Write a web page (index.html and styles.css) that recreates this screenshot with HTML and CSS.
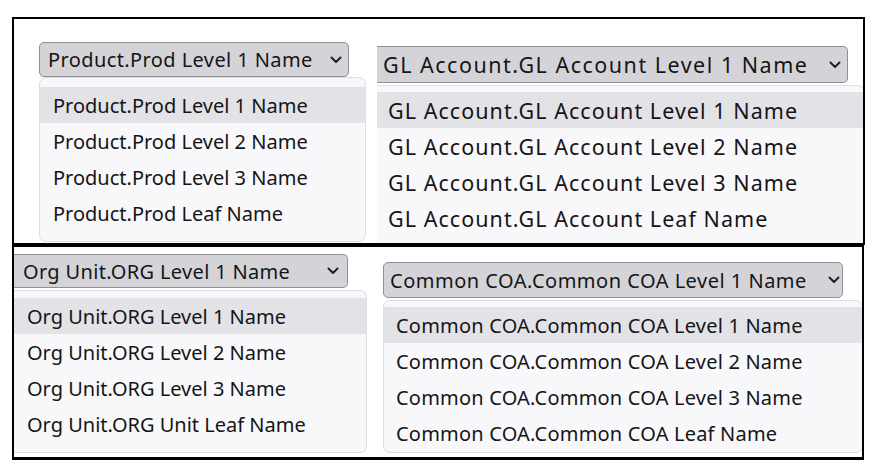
FILE: index.html
```html
<!DOCTYPE html>
<html lang="en">
<head>
<meta charset="utf-8">
<title>Hierarchy level dropdowns</title>
<link rel="stylesheet" href="styles.css">
</head>
<body>
<div class="frame">
  <section class="panel panel-top">
    <div class="pane pane-prod">
      <div class="select">
        <span class="select-label">Product.Prod Level 1 Name</span>
        <svg class="chev" viewBox="0 0 12 8"><polyline points="1.5,1.5 6,6 10.5,1.5"/></svg>
      </div>
      <ul class="menu">
        <li class="menu-item is-active">Product.Prod Level 1 Name</li>
        <li class="menu-item">Product.Prod Level 2 Name</li>
        <li class="menu-item">Product.Prod Level 3 Name</li>
        <li class="menu-item">Product.Prod Leaf Name</li>
      </ul>
    </div>
    <div class="pane pane-gl">
      <div class="select">
        <span class="select-label">GL Account.GL Account Level 1 Name</span>
        <svg class="chev" viewBox="0 0 12 8"><polyline points="1.5,1.5 6,6 10.5,1.5"/></svg>
      </div>
      <ul class="menu">
        <li class="menu-item is-active">GL Account.GL Account Level 1 Name</li>
        <li class="menu-item">GL Account.GL Account Level 2 Name</li>
        <li class="menu-item">GL Account.GL Account Level 3 Name</li>
        <li class="menu-item">GL Account.GL Account Leaf Name</li>
      </ul>
    </div>
  </section>
  <section class="panel panel-bottom">
    <div class="pane pane-org">
      <div class="select">
        <span class="select-label">Org Unit.ORG Level 1 Name</span>
        <svg class="chev" viewBox="0 0 12 8"><polyline points="1.5,1.5 6,6 10.5,1.5"/></svg>
      </div>
      <ul class="menu">
        <li class="menu-item is-active">Org Unit.ORG Level 1 Name</li>
        <li class="menu-item">Org Unit.ORG Level 2 Name</li>
        <li class="menu-item">Org Unit.ORG Level 3 Name</li>
        <li class="menu-item">Org Unit.ORG Unit Leaf Name</li>
      </ul>
    </div>
    <div class="pane pane-coa">
      <div class="select">
        <span class="select-label">Common COA.Common COA Level 1 Name</span>
        <svg class="chev" viewBox="0 0 12 8"><polyline points="1.5,1.5 6,6 10.5,1.5"/></svg>
      </div>
      <ul class="menu">
        <li class="menu-item is-active">Common COA.Common COA Level 1 Name</li>
        <li class="menu-item">Common COA.Common COA Level 2 Name</li>
        <li class="menu-item">Common COA.Common COA Level 3 Name</li>
        <li class="menu-item">Common COA.Common COA Leaf Name</li>
      </ul>
    </div>
  </section>
</div>
</body>
</html>
```

FILE: styles.css
```css
body {
  margin: 0;
  background: #ffffff;
  font-family: "Noto Sans", "Open Sans", sans-serif;
  font-size: 20px;
  color: #151517;
}

.frame {
  margin: 17px 0 0 12px;
  width: 853px;
}

.panel {
  display: flex;
  align-items: flex-start;
  box-sizing: border-box;
  border: 2px solid #000000;
  overflow: hidden;
}

.panel-top {
  height: 228px;
}

.panel-bottom {
  width: 852px;
  height: 215px;
  border-bottom-width: 3px;
}

.pane {
  flex: none;
  display: flex;
  flex-direction: column;
}

.select {
  display: flex;
  align-items: center;
  justify-content: space-between;
  box-sizing: border-box;
  background: #d4d4d8;
  border: 1px solid #8e8e93;
  border-radius: 5px;
  white-space: nowrap;
}

.chev {
  flex: none;
  width: 12px;
  height: 8px;
  fill: none;
  stroke: #222224;
  stroke-width: 2;
  stroke-linecap: round;
  stroke-linejoin: round;
}

.menu {
  list-style: none;
  margin: 0;
  padding: 0;
  box-sizing: border-box;
  background: #f8f8fa;
  border: 1px solid #dedee2;
  border-radius: 7px;
}

.menu-item {
  height: 36px;
  display: flex;
  align-items: center;
  white-space: nowrap;
}

.menu-item.is-active {
  background: #e2e2e7;
}

/* Product pane */
.pane-prod {
  margin: 23px 0 0 25px;
  width: 327px;
}
.pane-prod .select {
  width: 310px;
  height: 35px;
  padding: 0 6px 0 8px;
  letter-spacing: 0.4px;
}
.pane-prod .menu {
  height: 165px;
  padding-top: 9px;
}
.pane-prod .menu-item {
  padding-left: 13px;
}

/* GL Account pane */
.pane-gl {
  margin: 27px 0 0 11px;
  width: 488px;
  font-size: 21.5px;
}
.pane-gl .select {
  width: 471px;
  height: 37px;
  padding: 0 6px 0 6px;
  border-left: none;
  border-radius: 0 5px 5px 0;
  letter-spacing: 1.5px;
}
.pane-gl .menu {
  margin-top: 2px;
  height: 170px;
  padding-top: 6px;
  border-left: none;
  border-radius: 0 7px 7px 0;
  letter-spacing: 1.05px;
}
.pane-gl .menu-item {
  padding-left: 11px;
}

/* Org Unit pane */
.pane-org {
  margin: 7px 0 0 0;
  width: 353px;
}
.pane-org .select {
  width: 334px;
  height: 34px;
  padding: 0 8px 0 9px;
  border-left: none;
  border-radius: 0 5px 5px 0;
  letter-spacing: 0.33px;
}
.pane-org .menu {
  margin-top: 2px;
  height: 163px;
  padding-top: 7px;
  border-left: none;
  border-radius: 0 7px 7px 0;
}
.pane-org .menu-item {
  padding-left: 13px;
}

/* Common COA pane */
.pane-coa {
  margin: 15px 0 0 16px;
  width: 480px;
}
.pane-coa .select {
  width: 460px;
  height: 36px;
  padding: 0 2px 0 6px;
  letter-spacing: 0.5px;
}
.pane-coa .menu {
  margin-top: 2px;
  height: 153px;
  padding-top: 6px;
  letter-spacing: 0.2px;
}
.pane-coa .menu-item {
  padding-left: 12px;
}
```
